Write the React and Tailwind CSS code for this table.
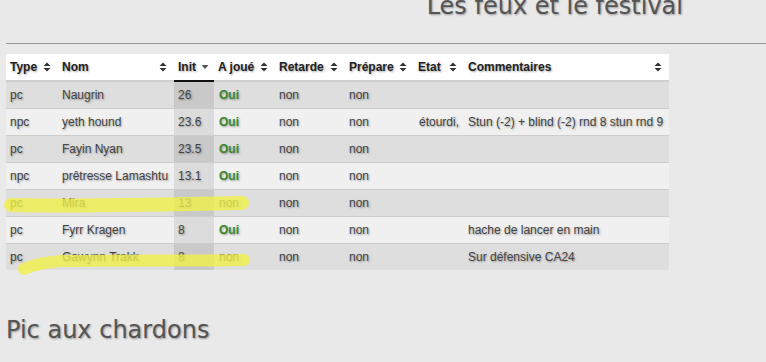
import React from 'react';

const rows = [
  { type: 'pc', nom: 'Naugrin', init: '26', joue: 'Oui', retarde: 'non', prepare: 'non', etat: '', com: '' },
  { type: 'npc', nom: 'yeth hound', init: '23.6', joue: 'Oui', retarde: 'non', prepare: 'non', etat: 'étourdi,', com: 'Stun (-2) + blind (-2) rnd 8 stun rnd 9' },
  { type: 'pc', nom: 'Fayin Nyan', init: '23.5', joue: 'Oui', retarde: 'non', prepare: 'non', etat: '', com: '' },
  { type: 'npc', nom: 'prêtresse Lamashtu', init: '13.1', joue: 'Oui', retarde: 'non', prepare: 'non', etat: '', com: '' },
  { type: 'pc', nom: 'Mira', init: '13', joue: 'non', retarde: 'non', prepare: 'non', etat: '', com: '' },
  { type: 'pc', nom: 'Fyrr Kragen', init: '8', joue: 'Oui', retarde: 'non', prepare: 'non', etat: '', com: 'hache de lancer en main' },
  { type: 'pc', nom: 'Gawynn Trakk', init: '8', joue: 'non', retarde: 'non', prepare: 'non', etat: '', com: 'Sur défensive CA24' },
];

const shadow = '[text-shadow:1px_1px_2px_rgba(0,0,0,0.35)]';

function SortIcon() {
  return (
    <svg width="8" height="10" viewBox="0 0 8 10" className="shrink-0">
      <path d="M4 0.5 L7.5 4 L0.5 4 Z" fill="#333" />
      <path d="M4 9.5 L7.5 6 L0.5 6 Z" fill="#333" />
    </svg>
  );
}

function DownIcon() {
  return (
    <svg width="8" height="6" viewBox="0 0 8 6" className="shrink-0">
      <path d="M0.5 1 L7.5 1 L4 5 Z" fill="#555" />
    </svg>
  );
}

function Th({ label, active }) {
  return (
    <th
      className={`h-[27px] pl-[4px] pr-[7px] text-left align-middle font-bold text-[12px] text-[#222] border-b-2 ${active ? 'border-[#111]' : 'border-[#cfcfcf]'}`}
    >
      <div className="flex items-center justify-between gap-[5px]">
        <span className={`${shadow} whitespace-nowrap`}>{label}</span>
        {active ? <DownIcon /> : <SortIcon />}
      </div>
    </th>
  );
}

export default function App() {
  return (
    <div
      className="relative min-h-[362px] w-[766px] overflow-hidden bg-[#e9e9e9]"
      style={{ fontFamily: '"Liberation Sans", Arial, sans-serif' }}
    >
      <div className="flex h-[43px] justify-end pr-[83px]">
        <h1
          className={`-mt-[8px] text-[24px] leading-[28px] font-normal text-[#555] ${shadow}`}
          style={{ fontFamily: '"DejaVu Sans", Verdana, sans-serif' }}
        >
          Les feux et le festival
        </h1>
      </div>
      <div className="ml-[6px] border-t border-[#999]" />

      <table className="mt-[10px] ml-[6px] w-[663px] table-fixed border-collapse text-[12px]">
        <colgroup>
          <col className="w-[52px]" />
          <col className="w-[116px]" />
          <col className="w-[40px]" />
          <col className="w-[61px]" />
          <col className="w-[70px]" />
          <col className="w-[69px]" />
          <col className="w-[50px]" />
          <col className="w-[205px]" />
        </colgroup>
        <thead className="bg-white">
          <tr>
            <Th label="Type" />
            <Th label="Nom" />
            <Th label="Init" active />
            <Th label="A joué" />
            <Th label="Retarde" />
            <Th label="Prépare" />
            <Th label="Etat" />
            <Th label="Commentaires" />
          </tr>
        </thead>
        <tbody>
          {rows.map((r, i) => {
            const odd = i % 2 === 0;
            return (
              <tr
                key={i}
                className={`h-[27px] border-t border-[#cdcdcd] text-[#444] ${odd ? 'bg-[#dedede]' : 'bg-[#f0f0f0]'}`}
              >
                <td className={`pl-[4px] ${shadow} whitespace-nowrap`}>{r.type}</td>
                <td className={`pl-[4px] ${shadow} whitespace-nowrap`}>{r.nom}</td>
                <td className={`pl-[4px] ${shadow} ${odd ? 'bg-[#c9c9c9]' : 'bg-[#dcdcdc]'}`}>{r.init}</td>
                <td className={`pl-[5px] ${shadow} ${r.joue === 'Oui' ? 'font-bold text-[#3b8a2b]' : ''}`}>{r.joue}</td>
                <td className={`pl-[4px] ${shadow}`}>{r.retarde}</td>
                <td className={`pl-[4px] ${shadow}`}>{r.prepare}</td>
                <td className={`pl-[5px] ${shadow} whitespace-nowrap`}>{r.etat}</td>
                <td className={`pl-[4px] ${shadow} whitespace-nowrap`}>{r.com}</td>
              </tr>
            );
          })}
        </tbody>
      </table>

      <h2
        className={`mt-[46px] ml-[6px] text-[24px] leading-[28px] font-normal text-[#555] ${shadow}`}
        style={{ fontFamily: '"DejaVu Sans", Verdana, sans-serif' }}
      >
        Pic aux chardons
      </h2>

      {/* highlighter marks drawn over the table */}
      <svg className="pointer-events-none absolute left-0 top-0" width="766" height="362">
        <path
          d="M11 205 C 60 206, 150 205, 242 203"
          stroke="#f0f04a"
          strokeOpacity="0.8"
          strokeWidth="14"
          strokeLinecap="round"
          fill="none"
        />
        <path
          d="M24 269 C 35 264, 48 262, 62 261 C 120 260, 190 261, 244 260"
          stroke="#f0f04a"
          strokeOpacity="0.8"
          strokeWidth="12"
          strokeLinecap="round"
          fill="none"
        />
      </svg>
    </div>
  );
}
